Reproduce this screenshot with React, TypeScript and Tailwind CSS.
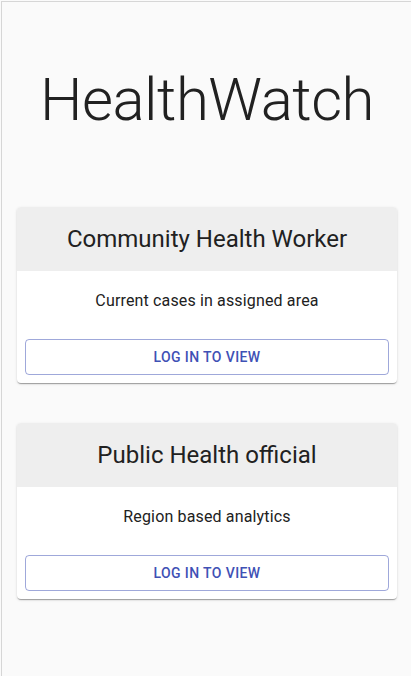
import React from 'react';

interface RoleCardProps {
  title: string;
  description: string;
}

const RoleCard = ({ title, description }: RoleCardProps) => (
  <div className="w-[380px] overflow-hidden rounded-[4px] bg-white shadow-[0px_2px_1px_-1px_rgba(0,0,0,0.2),0px_1px_1px_0px_rgba(0,0,0,0.14),0px_1px_3px_0px_rgba(0,0,0,0.12)]">
    <div className="flex h-16 items-center justify-center bg-[#eeeeee] text-[24px] leading-8 text-[#212121]">
      {title}
    </div>
    <div className="pt-[18px] text-center text-[16px] leading-6 tracking-[0.15px] text-[#212121]">
      {description}
    </div>
    <div className="px-2 pt-[26px] pb-2">
      <button className="flex h-9 w-full items-center justify-center rounded-[4px] border border-[rgba(63,81,181,0.5)] text-[14px] font-medium uppercase tracking-[0.4px] text-[#3f51b5]">
        Log in to view
      </button>
    </div>
  </div>
);

export default function App() {
  return (
    <div className="min-h-screen bg-[#fafafa] pt-px pl-px font-['Roboto',sans-serif]">
      <div className="min-h-[675px] border-t border-l border-[#d6d6d6] pl-[15px]">
        <div className="flex w-[380px] flex-col">
          <h1 className="mt-[62px] text-center text-[60px] font-light leading-[72px] tracking-[-0.5px] text-[#212121]">
            HealthWatch
          </h1>
          <div className="mt-[71px] flex flex-col gap-10">
            <RoleCard title="Community Health Worker" description="Current cases in assigned area" />
            <RoleCard title="Public Health official" description="Region based analytics" />
          </div>
        </div>
      </div>
    </div>
  );
}
